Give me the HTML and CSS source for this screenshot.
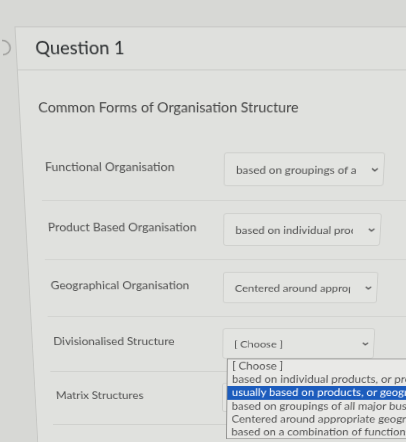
FILE: index.html
```html
<!DOCTYPE html>
<html lang="en">
<head>
    <meta charset="UTF-8">
    <title>Question 1</title>
    <link rel="stylesheet" href="styles.css">
</head>
<body>
    <div class="stage">
        <div class="rail">
            <svg class="rail-icon" width="13" height="18" viewBox="0 0 13 18"><circle cx="0" cy="9" r="7.5" fill="none" stroke="#9c9c9a" stroke-width="1.5"/></svg>
        </div>
        <div class="question">
            <div class="question-header">
                <h2>Question 1</h2>
            </div>
            <div class="question-body">
                <p class="question-text">Common Forms of Organisation Structure</p>

                <div class="match-row">
                    <div class="match-label">Functional Organisation</div>
                    <div class="select">
                        <span class="select-value">based on groupings of all major business functions</span>
                        <svg class="chevron" width="8" height="5" viewBox="0 0 8 5"><path d="M1 1l3 2.8 3-2.8" fill="none" stroke="#555" stroke-width="1.5"/></svg>
                    </div>
                </div>
                <div class="match-row">
                    <div class="match-label">Product Based Organisation</div>
                    <div class="select">
                        <span class="select-value">based on individual products, or product lines</span>
                        <svg class="chevron" width="8" height="5" viewBox="0 0 8 5"><path d="M1 1l3 2.8 3-2.8" fill="none" stroke="#555" stroke-width="1.5"/></svg>
                    </div>
                </div>
                <div class="match-row">
                    <div class="match-label">Geographical Organisation</div>
                    <div class="select">
                        <span class="select-value">Centered around appropriate geographical areas</span>
                        <svg class="chevron" width="8" height="5" viewBox="0 0 8 5"><path d="M1 1l3 2.8 3-2.8" fill="none" stroke="#555" stroke-width="1.5"/></svg>
                    </div>
                </div>
                <div class="match-row">
                    <div class="match-label">Divisionalised Structure</div>
                    <div class="select open">
                        <span class="select-value">[ Choose ]</span>
                        <svg class="chevron" width="8" height="5" viewBox="0 0 8 5"><path d="M1 1l3 2.8 3-2.8" fill="none" stroke="#555" stroke-width="1.5"/></svg>
                        <ul class="options">
                            <li>[ Choose ]</li>
                            <li>based on individual products, or product lines</li>
                            <li class="active">usually based on products, or geographical areas</li>
                            <li>based on groupings of all major business functions</li>
                            <li>Centered around appropriate geographical areas</li>
                            <li>based on a combination of functional and product lines</li>
                        </ul>
                    </div>
                </div>
                <div class="match-row">
                    <div class="match-label">Matrix Structures</div>
                    <div class="select">
                        <span class="select-value">[ Choose ]</span>
                        <svg class="chevron" width="8" height="5" viewBox="0 0 8 5"><path d="M1 1l3 2.8 3-2.8" fill="none" stroke="#555" stroke-width="1.5"/></svg>
                    </div>
                </div>
            </div>
        </div>
    </div>
</body>
</html>
```

FILE: styles.css
```css
html, body {
    height: 100%;
}
body {
    margin: 0;
    overflow: hidden;
    background: #d7d8d5;
    font-family: Lato, "Open Sans", sans-serif;
    color: #555;
}
/* the screen was photographed at a slight tilt */
.stage {
    display: flex;
    width: 480px;
    transform-origin: 200px 0;
    transform: perspective(600px) rotateX(-10deg);
}
.rail {
    width: 13px;
    flex: none;
    padding-top: 40px;
}
.rail-icon {
    display: block;
}
.question {
    width: 460px;
    margin-top: 27px;
    border: 1px solid #c6c7c4;
    background: #e0e1de;
}
.question-header {
    height: 44px;
    display: flex;
    align-items: center;
    padding-left: 19px;
    background: #dfe0dd;
    border-bottom: 1px solid #c9cac7;
}
.question-header h2 {
    margin: 0 0 2px;
    font-size: 18.5px;
    font-weight: normal;
    color: #2a2d2f;
}
.question-body {
    padding-left: 18px;
    padding-bottom: 40px;
}
.question-text {
    margin: 29px 0 26px 1px;
    font-size: 14.7px;
    line-height: 20px;
    color: #454545;
}
.match-row {
    display: flex;
    align-items: flex-start;
    height: 69px;
    box-sizing: border-box;
    padding-top: 14px;
    border-bottom: 1px solid #d0d1ce;
}
.match-label {
    width: 188px;
    padding: 6px 0 0 5px;
    font-size: 13px;
    line-height: 20px;
    color: #505050;
}
.select {
    position: relative;
    display: flex;
    align-items: center;
    width: 169px;
    height: 38px;
    box-sizing: border-box;
    padding-left: 12px;
    border: 1px solid #cdcecb;
    border-radius: 3px;
    background: #e3e4e1;
    font-size: 12.2px;
    color: #505050;
}
.select-value {
    width: 126px;
    overflow: hidden;
    white-space: nowrap;
}
.chevron {
    margin: 1px 5px 0 auto;
}
.options {
    position: absolute;
    top: 100%;
    left: 4px;
    width: 260px;
    margin: 1px 0 0;
    padding: 0;
    list-style: none;
    background: #e9e9e7;
    border: 1px solid #8d8d8b;
    font-size: 12.9px;
    line-height: 17.2px;
    color: #555;
    z-index: 2;
}
.options li {
    padding: 0 5px;
    white-space: nowrap;
    overflow: hidden;
}
.options li.active {
    background: #1c5cbd;
    color: #fff;
}
```
